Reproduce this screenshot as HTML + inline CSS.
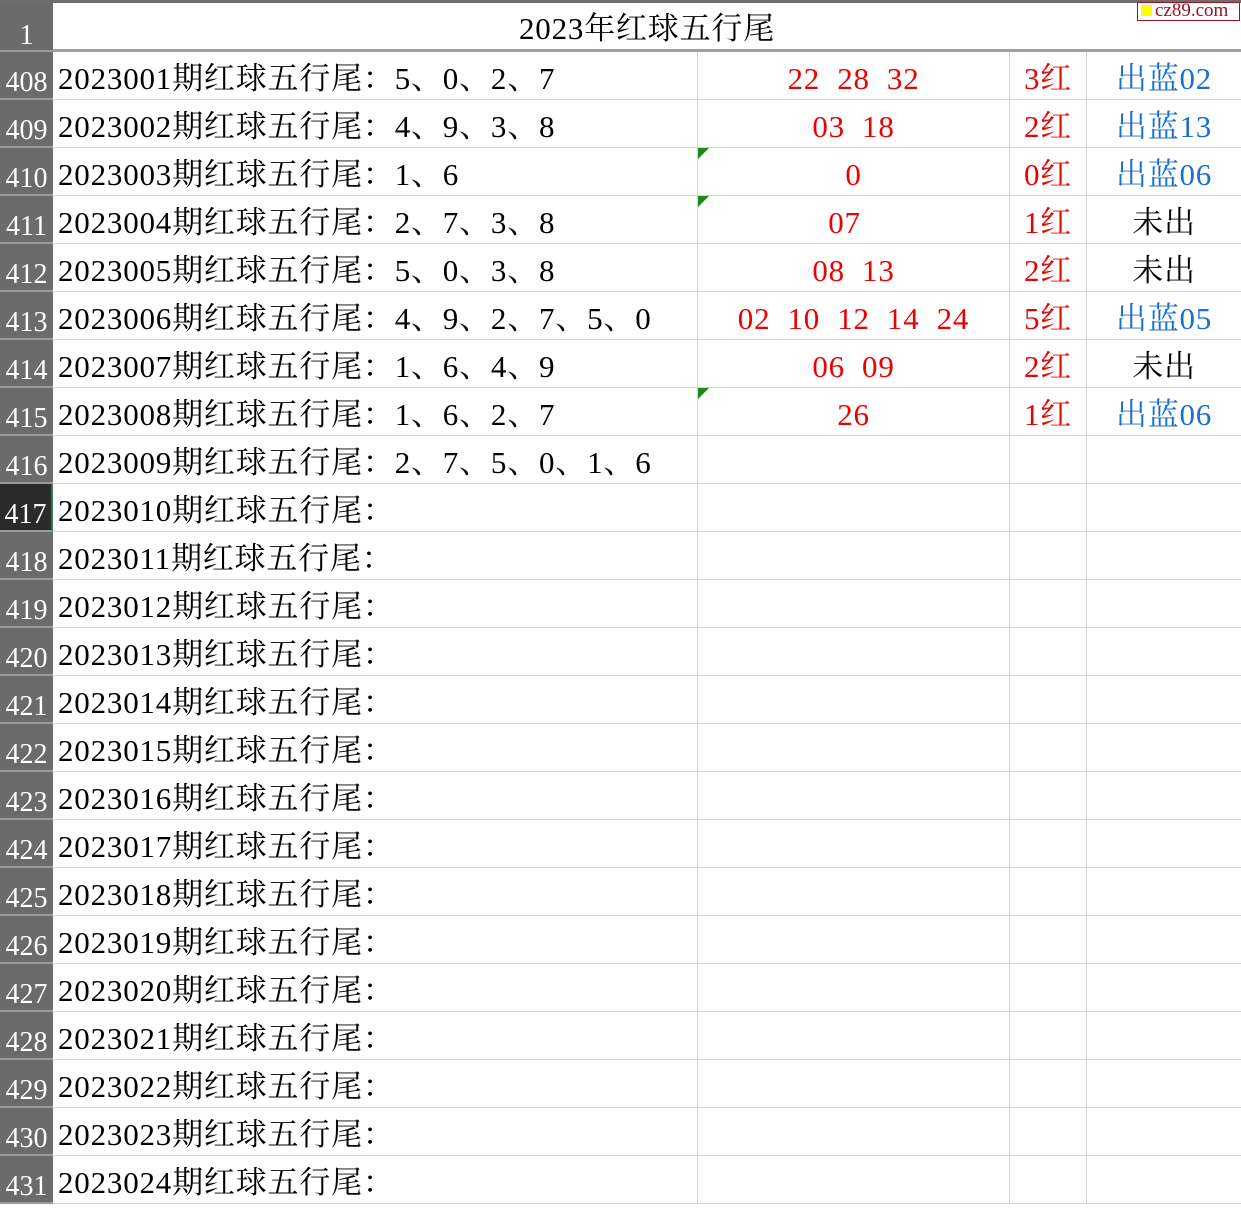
<!DOCTYPE html>
<html><head><meta charset="utf-8"><style>
*{margin:0;padding:0;box-sizing:border-box}
body{width:1241px;height:1204px;overflow:hidden;background:#fff;font-family:"Liberation Serif","Noto Serif CJK SC",serif;position:relative}
.top{position:absolute;left:0;top:0;width:1241px;height:3px;background:#6d6d6d}
.rh{position:absolute;left:0;width:53px;background:#6b6b6b;color:#fff;font-size:28px;text-align:center;border-bottom:2px solid #9a9a9a}
.row{position:absolute;left:53px;width:1188px;height:48px;border-bottom:1px solid #d4d4d4;font-size:31px;letter-spacing:0.8px}
.c{position:absolute;top:0;height:47px;line-height:54px;border-right:1px solid #d4d4d4;white-space:pre}
.a{left:0;width:645px;padding-left:5px}
.b{left:645px;width:312px;text-align:center;color:#e00}
.cc{left:957px;width:77px;text-align:center;color:#e00}
.d{left:1034px;width:154px;text-align:center;border-right:none}
.blue{color:#1a6fd6}.blk{color:#000}
.tri{position:absolute;left:0;top:0;width:0;height:0;border-top:11px solid #1a8a1a;border-right:11px solid transparent}
</style></head><body>
<div class="top"></div>
<div class="rh" style="top:3px;height:49px;line-height:66px">1</div>
<div style="position:absolute;left:53px;top:3px;width:1188px;height:49px;border-bottom:3px solid #a0a0a0;font-size:31px;text-align:center;line-height:52px;letter-spacing:0.8px">2023年红球五行尾</div>
<div style="position:absolute;left:1137px;top:2px;width:103px;height:19px;border:1px solid #a01020;background:#fff;font-size:19px;line-height:16px;color:#a01020;padding-left:3px;white-space:nowrap"><span style="display:inline-block;width:11px;height:11px;background:#ff0;vertical-align:0px;margin-right:3px"></span>cz89.com</div>
<div id="rows"></div>
<script>
var data=[
["5、0、2、7","22  28  32","3红","出蓝02",0],
["4、9、3、8","03  18","2红","出蓝13",0],
["1、6","0","0红","出蓝06",1],
["2、7、3、8","07","1红","未出",1],
["5、0、3、8","08  13","2红","未出",0],
["4、9、2、7、5、0","02  10  12  14  24","5红","出蓝05",0],
["1、6、4、9","06  09","2红","未出",0],
["1、6、2、7","26","1红","出蓝06",1],
["2、7、5、0、1、6","","","",0]];
var h="";
for(var i=0;i<24;i++){
 var y=52+i*48,n=408+i,p="2023"+String(i+1).padStart(3,"0")+"期红球五行尾：";
 var d=data[i]||["","","","",0];
 var sel=n==417;
 h+='<div class="rh" style="top:'+y+'px;height:48px;line-height:62px;'+(sel?'background:#2a2a2a;border-right:2px solid #2e7d4f;':'')+'">'+n+'</div>';
 var bx=(i==3)?'style="padding-right:18px"':'';
 h+='<div class="row" style="top:'+y+'px"><div class="c a">'+p+d[0]+'</div><div class="c b" '+bx+'>'+(d[4]?'<div class="tri"></div>':'')+d[1]+'</div><div class="c cc">'+d[2]+'</div><div class="c d '+(d[3]=="未出"?"blk":"blue")+'">'+d[3]+'</div></div>';
}
document.getElementById("rows").innerHTML=h;
</script>
</body></html>
